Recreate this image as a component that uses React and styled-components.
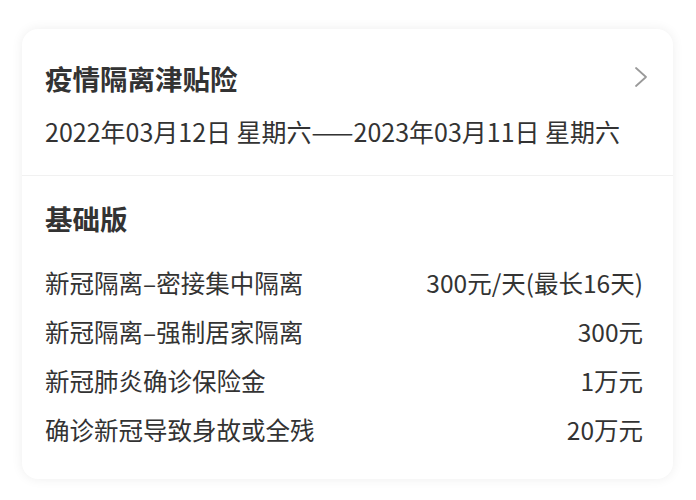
import React from 'react';
import styled, { createGlobalStyle } from 'styled-components';

const GlobalStyle = createGlobalStyle`
  body {
    margin: 0;
    background: #ffffff;
    font-family: "Noto Sans CJK SC", "Noto Sans", sans-serif;
    color: #333333;
  }
`;

const Page = styled.div`
  padding: 29px 23px 20px 22px;
`;

const Card = styled.div`
  width: 651px;
  background: #ffffff;
  border-radius: 16px;
  box-shadow: 0 0 12px rgba(0, 0, 0, 0.07);
  overflow: hidden;
`;

const Header = styled.div`
  padding: 31px 25px 27px 23px;
  border-bottom: 1px solid #f1f1f1;
`;

const TitleRow = styled.div`
  display: flex;
  align-items: center;
  justify-content: space-between;
`;

const Title = styled.div`
  font-size: 27.5px;
  font-weight: 700;
  line-height: 36px;
  color: #333333;
`;

const Chevron = styled.svg`
  width: 14px;
  height: 22px;
  flex-shrink: 0;
  margin-top: -2px;
`;

const DateLine = styled.div`
  margin-top: 18px;
  font-size: 25px;
  line-height: 34px;
  color: #333333;
  white-space: nowrap;
`;

const Body = styled.div`
  padding: 24px 30px 25px 23px;
`;

const Plan = styled.div`
  font-size: 27.5px;
  font-weight: 700;
  line-height: 36px;
  margin-bottom: 22px;
`;

const Row = styled.div`
  display: flex;
  justify-content: space-between;
  align-items: center;
  height: 49px;
  font-size: 24.5px;
  color: #333333;
`;

const items = [
  ['新冠隔离–密接集中隔离', '300元/天(最长16天)'],
  ['新冠隔离–强制居家隔离', '300元'],
  ['新冠肺炎确诊保险金', '1万元'],
  ['确诊新冠导致身故或全残', '20万元'],
];

export default function App() {
  return (
    <Page>
      <GlobalStyle />
      <Card>
        <Header>
          <TitleRow>
            <Title>疫情隔离津贴险</Title>
            <Chevron viewBox="0 0 14 22">
              <path d="M2 2 L12 11 L2 20" fill="none" stroke="#9a9a9a" strokeWidth="1.8" strokeLinecap="round" strokeLinejoin="round" />
            </Chevron>
          </TitleRow>
          <DateLine>2022年03月12日 星期六——2023年03月11日 星期六</DateLine>
        </Header>
        <Body>
          <Plan>基础版</Plan>
          {items.map(([label, value]) => (
            <Row key={label}>
              <span>{label}</span>
              <span>{value}</span>
            </Row>
          ))}
        </Body>
      </Card>
    </Page>
  );
}
